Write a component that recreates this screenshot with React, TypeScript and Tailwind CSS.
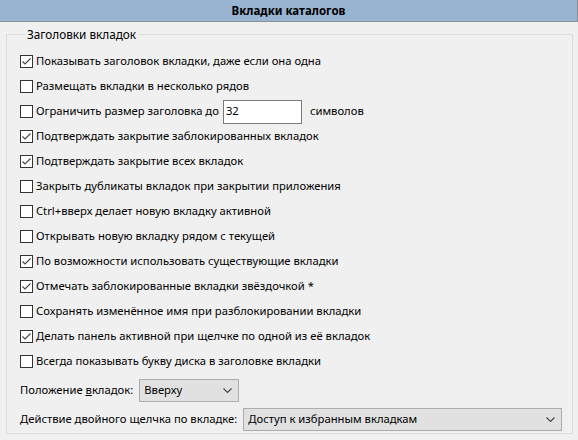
import React from "react";

const font = { fontFamily: '"Noto Sans", "Open Sans", sans-serif' };

function Box({ checked }: { checked: boolean }) {
  return (
    <span className="w-[13px] h-[13px] border border-[#333333] bg-white flex items-center justify-center shrink-0">
      {checked && (
        <svg width="11" height="11" viewBox="0 0 11 11">
          <path d="M1.5 5.5 L4 8 L9.5 2.5" fill="none" stroke="#444" strokeWidth="1.1" />
        </svg>
      )}
    </span>
  );
}

function Row({ checked, children }: { checked: boolean; children: React.ReactNode }) {
  return (
    <div className="h-[25px] flex items-center gap-[3px] whitespace-nowrap">
      <Box checked={checked} />
      {children}
    </div>
  );
}

function Combo({ value, className }: { value: string; className: string }) {
  return (
    <div className={`h-[23px] shrink-0 bg-[#e1e1e1] border border-[#adadad] flex items-center justify-between pl-[4px] pr-[6px] ${className}`}>
      <span>{value}</span>
      <svg width="9" height="6" viewBox="0 0 9 6">
        <path d="M0.5 0.5 L4.5 4.5 L8.5 0.5" fill="none" stroke="#444" strokeWidth="1.1" />
      </svg>
    </div>
  );
}

const items: [boolean, string][] = [
  [true, "Показывать заголовок вкладки, даже если она одна"],
  [false, "Размещать вкладки в несколько рядов"],
];

const rest: [boolean, string][] = [
  [true, "Подтверждать закрытие заблокированных вкладок"],
  [true, "Подтверждать закрытие всех вкладок"],
  [false, "Закрыть дубликаты вкладок при закрытии приложения"],
  [false, "Ctrl+вверх делает новую вкладку активной"],
  [false, "Открывать новую вкладку рядом с текущей"],
  [true, "По возможности использовать существующие вкладки"],
  [true, "Отмечать заблокированные вкладки звёздочкой *"],
  [false, "Сохранять изменённое имя при разблокировании вкладки"],
  [true, "Делать панель активной при щелчке по одной из её вкладок"],
  [false, "Всегда показывать букву диска в заголовке вкладки"],
];

export default function App() {
  return (
    <div className="w-[578px] h-[440px] bg-[#f0f0f0] text-[11.25px] text-black overflow-hidden" style={font}>
      <div className="h-[22px] bg-[#99b4d1] border-b border-r border-[#8a9099] flex items-center justify-center font-bold text-[11.5px]">
        Вкладки каталогов
      </div>
      <fieldset className="mx-[6px] mt-[4px] w-[567px] h-[408px] border border-[#dcdcdc] pl-[13px] pt-[7px]">
        <legend className="ml-[5px] px-[2px] leading-[16px] text-[11.75px]">Заголовки вкладок</legend>
        {items.map(([c, t]) => (
          <Row key={t} checked={c}>{t}</Row>
        ))}
        <Row checked={false}>
          <span>Ограничить размер заголовка до</span>
          <div className="ml-[1px] w-[79px] h-[24px] bg-white border border-[#7a7a7a] flex items-center pl-[2px]">32</div>
          <span className="ml-[5px]">символов</span>
        </Row>
        {rest.map(([c, t]) => (
          <Row key={t} checked={c}>{t}</Row>
        ))}
        <div className="h-[29px] mt-[2px] flex items-center whitespace-nowrap">
          <span>
            Положение <span className="underline">в</span>кладок:
          </span>
          <Combo value="Вверху" className="w-[100px] ml-[6px]" />
        </div>
        <div className="h-[29px] flex items-center whitespace-nowrap">
          <span>Действие двойного щелчка по вкладке:</span>
          <Combo value="Доступ к избранным вкладкам" className="w-[319px] ml-[6px]" />
        </div>
      </fieldset>
    </div>
  );
}
